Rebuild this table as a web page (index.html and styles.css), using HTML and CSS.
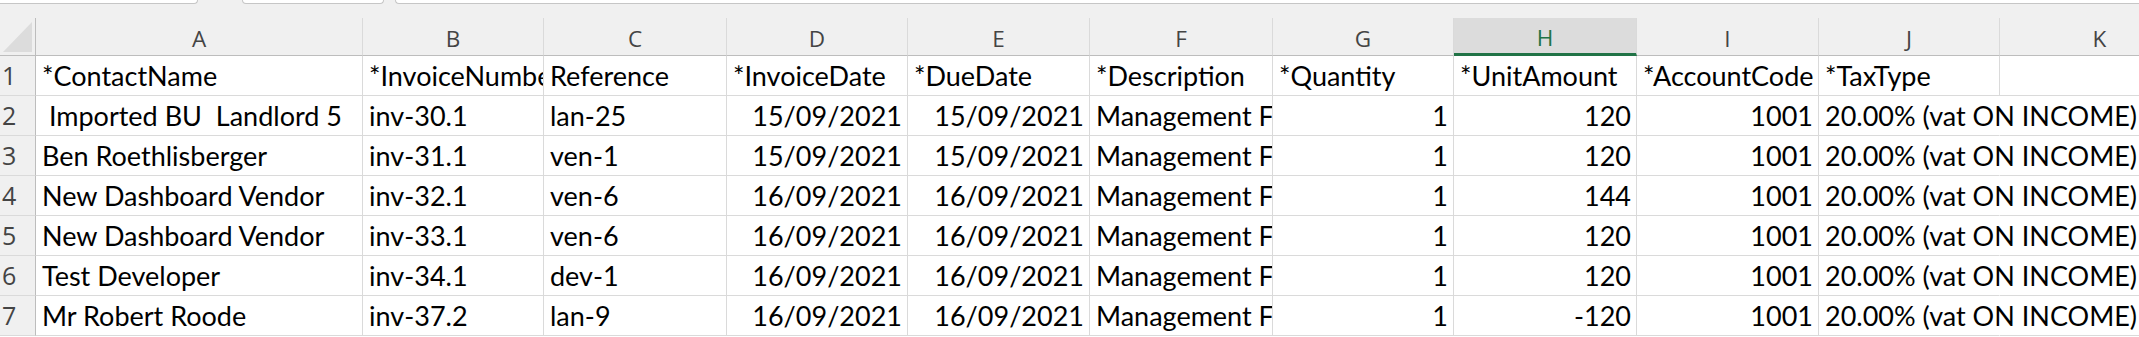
FILE: index.html
```html
<!DOCTYPE html>
<html lang="en">
<head>
<meta charset="utf-8">
<title>Invoices</title>
<link rel="stylesheet" href="styles.css">
</head>
<body>
<div class="sheet">
  <div class="topbar">
    <span class="fbox fbox-name"></span>
    <span class="fbox fbox-mid"></span>
    <span class="fbox fbox-formula"></span>
  </div>
  <div class="grid">
    <div class="corner"><svg width="35" height="37" viewBox="0 0 35 37"><polygon points="32,4 32,34 3,34" fill="#dcdcdc"/></svg></div>
    <div class="hd">A</div><div class="hd">B</div><div class="hd">C</div><div class="hd">D</div><div class="hd">E</div><div class="hd">F</div><div class="hd">G</div><div class="hd hd-sel">H</div><div class="hd">I</div><div class="hd">J</div><div class="hd">K</div>

    <div class="rn">1</div>
    <div class="c">*ContactName</div><div class="c">*InvoiceNumbe</div><div class="c">Reference</div><div class="c">*InvoiceDate</div><div class="c">*DueDate</div><div class="c">*Description</div><div class="c">*Quantity</div><div class="c">*UnitAmount</div><div class="c">*AccountCode</div><div class="c">*TaxType</div><div class="c"></div>

    <div class="rn">2</div>
    <div class="c">&nbsp;Imported BU&nbsp; Landlord 5</div><div class="c">inv-30.1</div><div class="c">lan-25</div><div class="c r">15/09/2021</div><div class="c r">15/09/2021</div><div class="c">Management F</div><div class="c r">1</div><div class="c r">120</div><div class="c r">1001</div><div class="c ovf">20.00% (vat ON INCOME)</div><div class="c"></div>

    <div class="rn">3</div>
    <div class="c">Ben Roethlisberger</div><div class="c">inv-31.1</div><div class="c">ven-1</div><div class="c r">15/09/2021</div><div class="c r">15/09/2021</div><div class="c">Management F</div><div class="c r">1</div><div class="c r">120</div><div class="c r">1001</div><div class="c ovf">20.00% (vat ON INCOME)</div><div class="c"></div>

    <div class="rn">4</div>
    <div class="c">New Dashboard Vendor</div><div class="c">inv-32.1</div><div class="c">ven-6</div><div class="c r">16/09/2021</div><div class="c r">16/09/2021</div><div class="c">Management F</div><div class="c r">1</div><div class="c r">144</div><div class="c r">1001</div><div class="c ovf">20.00% (vat ON INCOME)</div><div class="c"></div>

    <div class="rn">5</div>
    <div class="c">New Dashboard Vendor</div><div class="c">inv-33.1</div><div class="c">ven-6</div><div class="c r">16/09/2021</div><div class="c r">16/09/2021</div><div class="c">Management F</div><div class="c r">1</div><div class="c r">120</div><div class="c r">1001</div><div class="c ovf">20.00% (vat ON INCOME)</div><div class="c"></div>

    <div class="rn">6</div>
    <div class="c">Test Developer</div><div class="c">inv-34.1</div><div class="c">dev-1</div><div class="c r">16/09/2021</div><div class="c r">16/09/2021</div><div class="c">Management F</div><div class="c r">1</div><div class="c r">120</div><div class="c r">1001</div><div class="c ovf">20.00% (vat ON INCOME)</div><div class="c"></div>

    <div class="rn">7</div>
    <div class="c">Mr Robert Roode</div><div class="c">inv-37.2</div><div class="c">lan-9</div><div class="c r">16/09/2021</div><div class="c r">16/09/2021</div><div class="c">Management F</div><div class="c r">1</div><div class="c r">-120</div><div class="c r">1001</div><div class="c ovf">20.00% (vat ON INCOME)</div><div class="c"></div>
  </div>
</div>
</body>
</html>
```

FILE: styles.css
```css
html, body {
  margin: 0;
  padding: 0;
  background: #ffffff;
}
body {
  width: 2139px;
  height: 337px;
  overflow: hidden;
}
.sheet {
  width: 2139px;
  overflow: hidden;
}
.topbar {
  height: 18px;
  background: #f0f0f0;
  display: flex;
  align-items: flex-start;
}
.fbox {
  display: block;
  height: 4px;
  background: #ffffff;
  border: 1px solid #c6c6c6;
  border-top: none;
  box-sizing: border-box;
  border-radius: 0 0 4px 4px;
}
.fbox-name {
  width: 198px;
  border-left: none;
  border-radius: 0 0 4px 0;
}
.fbox-mid {
  width: 142px;
  margin-left: 44px;
}
.fbox-formula {
  flex: 1;
  margin-left: 11px;
  border-right: none;
  border-radius: 0 0 0 4px;
}
.grid {
  display: grid;
  grid-template-columns: 36px 327px 181px 183px 181px 182px 183px 181px 183px 182px 181px 200px;
  grid-template-rows: 38px repeat(7, 40px);
  width: 2200px;
}
.corner {
  background: #f0f0f0;
  border-right: 1px solid #bdbdbd;
  border-bottom: 1px solid #bdbdbd;
  box-sizing: border-box;
}
.corner svg {
  display: block;
}
.hd {
  background: #f0f0f0;
  border-right: 1px solid #dadada;
  border-bottom: 1px solid #bdbdbd;
  box-sizing: border-box;
  display: flex;
  align-items: flex-end;
  justify-content: center;
  font-family: "Open Sans", "Noto Sans", sans-serif;
  font-size: 22.5px;
  line-height: 30px;
  color: #444444;
  padding-bottom: 1px;
}
.hd-sel {
  background: #dcdcdc;
  color: #217346;
  border-bottom: 3px solid #217346;
  padding-bottom: 0;
}
.rn {
  background: #f0f0f0;
  border-right: 1px solid #bdbdbd;
  border-bottom: 1px solid #dadada;
  box-sizing: border-box;
  display: flex;
  align-items: flex-end;
  font-family: "Open Sans", "Noto Sans", sans-serif;
  font-size: 25px;
  line-height: 30px;
  color: #444444;
  padding: 0 0 5px 2px;
}
.c {
  border-right: 1px solid #dadada;
  border-bottom: 1px solid #dadada;
  box-sizing: border-box;
  display: flex;
  align-items: flex-end;
  justify-content: flex-start;
  padding: 0 5px 3px 6px;
  overflow: hidden;
  white-space: pre;
  font-family: "Lato", "Liberation Sans", sans-serif;
  font-size: 27px;
  line-height: 32px;
  color: #000000;
}
.r {
  justify-content: flex-end;
}
.ovf {
  overflow: visible;
  border-right-color: transparent;
}
```
